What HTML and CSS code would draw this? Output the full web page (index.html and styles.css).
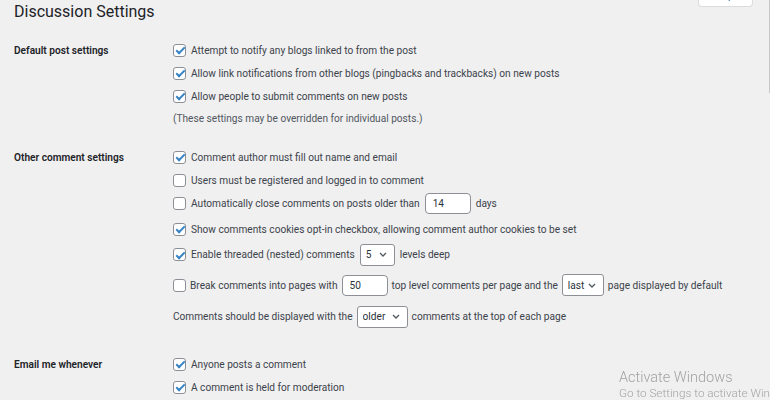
FILE: index.html
```html
<!DOCTYPE html>
<html>
<head>
  <meta charset="utf-8">
  <title>Discussion Settings</title>
  <link rel="stylesheet" href="styles.css">
</head>
<body>
  <div class="wrap">
    <div class="page-head">
      <h1>Discussion Settings</h1>
      <button class="help-tab">Help</button>
    </div>

    <div class="section first">
      <div class="section-label">Default post settings</div>
      <div class="fields">
        <label class="row"><input type="checkbox" checked>Attempt to notify any blogs linked to from the post</label>
        <label class="row"><input type="checkbox" checked>Allow link notifications from other blogs (pingbacks and trackbacks) on new posts</label>
        <label class="row"><input type="checkbox" checked>Allow people to submit comments on new posts</label>
        <p class="row note">(These settings may be overridden for individual posts.)</p>
      </div>
    </div>

    <div class="section">
      <div class="section-label">Other comment settings</div>
      <div class="fields">
        <label class="row"><input type="checkbox" checked>Comment author must fill out name and email</label>
        <label class="row"><input type="checkbox">Users must be registered and logged in to comment</label>
        <div class="row row-input">
          <input type="checkbox">Automatically close comments on posts older than
          <input class="num" type="text" value="14">days
        </div>
        <label class="row row-spaced"><input type="checkbox" checked>Show comments cookies opt-in checkbox, allowing comment author cookies to be set</label>
        <div class="row row-select">
          <input type="checkbox" checked>Enable threaded (nested) comments
          <select class="select select-sm"><option>5</option></select>levels deep
        </div>
        <div class="row row-paged">
          <input type="checkbox">Break comments into pages with
          <input class="num" type="text" value="50">top level comments per page and the
          <select class="select select-md"><option>last</option></select>page displayed by default
        </div>
        <div class="row row-order">
          Comments should be displayed with the
          <select class="select select-lg"><option>older</option></select>comments at the top of each page
        </div>
      </div>
    </div>

    <div class="section last">
      <div class="section-label">Email me whenever</div>
      <div class="fields">
        <label class="row"><input type="checkbox" checked>Anyone posts a comment</label>
        <label class="row"><input type="checkbox" checked>A comment is held for moderation</label>
      </div>
    </div>
  </div>

  <div class="scroll-thumb"></div>

  <div class="activate">
    <p class="activate-title">Activate Windows</p>
    <p class="activate-text">Go to Settings to activate Windows.</p>
  </div>
</body>
</html>
```

FILE: styles.css
```css
* {
  box-sizing: border-box;
  margin: 0;
  padding: 0;
}

html,
body {
  overflow: hidden;
}

body {
  background: #f0f0f1;
  color: #3c434a;
  font-family: Roboto, "Noto Sans", sans-serif;
  font-size: 10.15px;
}

.wrap {
  padding: 0 17px 0 14px;
}

/* header */

.page-head {
  display: flex;
  justify-content: space-between;
  align-items: flex-start;
  height: 24px;
}

h1 {
  font-size: 16px;
  font-weight: 400;
  line-height: 24px;
  color: #1d2327;
}

.help-tab {
  width: 55px;
  height: 22px;
  margin-top: -15px;
  padding-left: 14px;
  text-align: left;
  font-family: inherit;
  font-size: 10.15px;
  color: #2271b1;
  background: #fff;
  border: 1px solid #dcdcde;
  border-top: none;
  border-radius: 0 0 4px 4px;
}

/* sections */

.section {
  display: flex;
  margin-top: 16px;
}

.section.first {
  margin-top: 14.5px;
}

.section.last {
  margin-top: 21px;
}

.section-label {
  width: 159px;
  flex-shrink: 0;
  line-height: 23px;
  font-weight: 600;
  color: #1d2327;
}

.fields {
  display: flex;
  flex-direction: column;
}

.row {
  display: flex;
  align-items: center;
  gap: 5px;
  height: 23px;
  white-space: nowrap;
}

.note {
  height: 22px;
  color: #50575e;
}

.row-input {
  height: 24px;
}

.row-spaced {
  margin-top: 2px;
}

.row-select {
  height: 28px;
}

.row-paged {
  height: 33px;
  gap: 4px;
}

.row-order {
  height: 30px;
  gap: 4px;
}

/* controls */

input[type="checkbox"] {
  appearance: none;
  position: relative;
  flex-shrink: 0;
  width: 13px;
  height: 13px;
  background: #fff;
  border: 1px solid #8c8f94;
  border-radius: 3px;
}

input[type="checkbox"]:checked::before {
  content: "";
  position: absolute;
  left: 3.5px;
  top: 0.5px;
  width: 3px;
  height: 7px;
  border: solid #3582c4;
  border-width: 0 2px 2px 0;
  transform: rotate(45deg);
}

.num {
  width: 46px;
  height: 21px;
  padding: 0 7px;
  font-family: inherit;
  font-size: 10.15px;
  color: #2c3338;
  background: #fff;
  border: 1px solid #8c8f94;
  border-radius: 4px;
}

.select {
  appearance: none;
  height: 22px;
  padding: 0 0 0 5px;
  font-family: inherit;
  font-size: 10.15px;
  color: #2c3338;
  background: #fff url("data:image/svg+xml,%3Csvg xmlns='http://www.w3.org/2000/svg' width='8' height='5' viewBox='0 0 8 5'%3E%3Cpath d='M1 1l3 3 3-3' fill='none' stroke='%2350575e' stroke-width='1.3'/%3E%3C/svg%3E") no-repeat right 7px center;
  border: 1px solid #8c8f94;
  border-radius: 3px;
}

.select-sm {
  width: 35px;
}

.select-md {
  width: 42px;
}

.select-lg {
  width: 51px;
}

/* overlays */

.scroll-thumb {
  position: fixed;
  top: 0;
  right: 0;
  width: 1px;
  height: 93px;
  background: #c9c9c9;
}

.activate {
  position: fixed;
  top: 369px;
  left: 619px;
  color: #a3a3a3;
  white-space: nowrap;
  font-weight: 300;
}

.activate-title {
  font-size: 14.5px;
  line-height: 17px;
}

.activate-text {
  font-size: 11.7px;
  line-height: 15px;
}
```
